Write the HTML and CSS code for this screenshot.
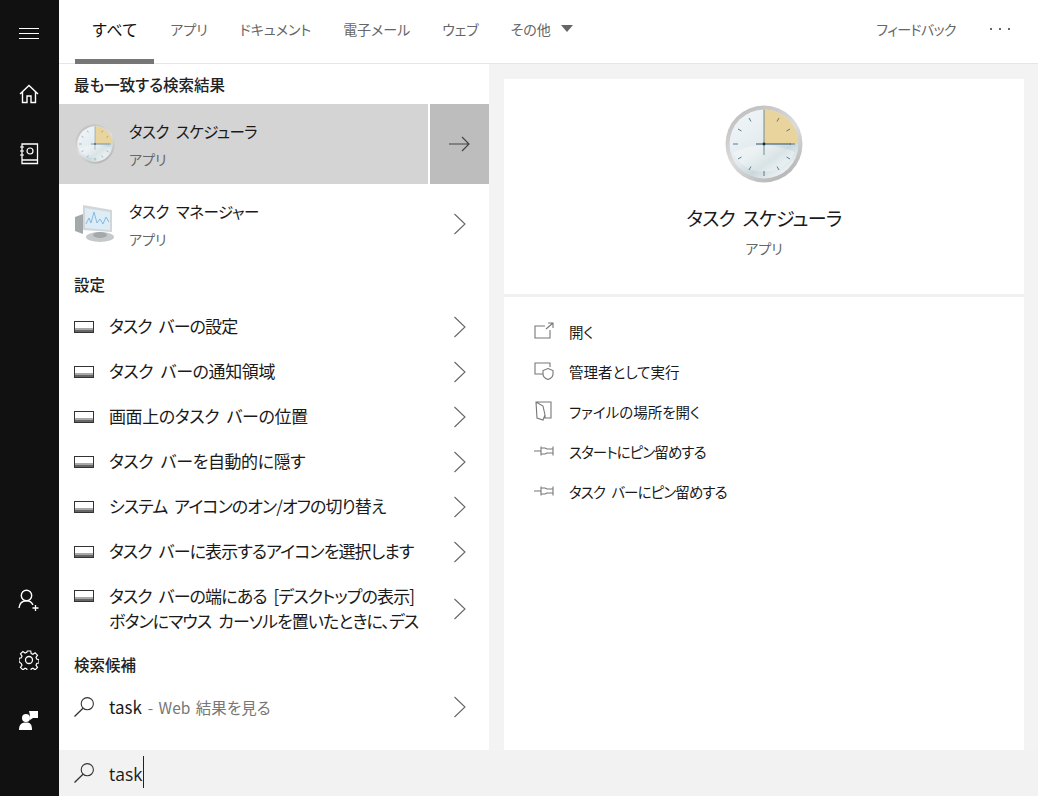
FILE: index.html
```html
<!DOCTYPE html>
<html lang="ja">
<head>
    <meta charset="UTF-8">
    <meta name="viewport" content="width=device-width, initial-scale=1.0">
    <title>タスク スケジューラ</title>
    <link rel="stylesheet" href="styles.css">
</head>
<body>
    <svg class="defs" width="0" height="0">
        <defs>
            <symbol id="chev" viewBox="0 0 14 24">
                <path d="M1.5 2 12 12 1.5 22" fill="none" stroke="#666" stroke-width="1.1"/>
            </symbol>
            <symbol id="bar" viewBox="0 0 20 12">
                <rect x="0.5" y="0.5" width="19" height="11" fill="none" stroke="#333"/>
                <rect x="1" y="7" width="18" height="2" fill="#a8a8a8"/>
                <rect x="1" y="9" width="18" height="2" fill="#666"/>
            </symbol>
            <symbol id="search" viewBox="0 0 20 20">
                <circle cx="13.3" cy="6.7" r="6.1" fill="none" stroke="#333" stroke-width="1.1"/>
                <path d="M9 11.2 .5 19.5" fill="none" stroke="#333" stroke-width="1.3"/>
            </symbol>
            <symbol id="pin" viewBox="0 0 20 12">
                <path d="M0 6H7M7 1.5V10.5M7 3H11L13 4H19M19 1.5V10.5M19 8H13L11 9H7" fill="none" stroke="#777" stroke-width="1.1"/>
            </symbol>
            <linearGradient id="face" x1="0.2" y1="0.1" x2="0.8" y2="0.95">
                <stop offset="0" stop-color="#eef3f6"/>
                <stop offset="0.5" stop-color="#e3ebee"/>
                <stop offset="0.72" stop-color="#c9d8dc"/>
                <stop offset="1" stop-color="#f2f6f7"/>
            </linearGradient>
            <linearGradient id="rim" x1="0.2" y1="0" x2="0.8" y2="1">
                <stop offset="0" stop-color="#bdbdbd"/>
                <stop offset="0.5" stop-color="#dcdcdc"/>
                <stop offset="1" stop-color="#b2b2b2"/>
            </linearGradient>
            <symbol id="clock" viewBox="0 0 78 78">
                <circle cx="39" cy="39" r="38.5" fill="url(#rim)"/>
                <circle cx="39" cy="39" r="34.5" fill="url(#face)"/>
                <path d="M39 39V4.5A34.5 34.5 0 0 1 73.5 39Z" fill="#e8d49c"/>
                <path d="M8 48C30 36 52 40 70 47A34.5 34.5 0 0 1 8 48Z" fill="#fff" opacity=".3"/>
                <g stroke="#4d6f80" stroke-width=".9">
                    <path d="M39 66v5M8 39h5M24 13l2 3.5M54 65l-2-3.5M13 24l3.5 2M65 54l-3.5-2M13 54l3.5-2M24 65l2-3.5M54 13l-2 3.5M65 24l-3.5 2M65 39h5"/>
                </g>
                <path d="M39 4.5V50" stroke="#6d8c9c"/>
                <path d="M31 39H66" stroke="#2c5068"/>
                <circle cx="39" cy="39" r="1.4" fill="#1d2b33"/>
            </symbol>
        </defs>
    </svg>

    <div class="app">
        <nav class="rail">
            <div class="rail-top">
                <button class="rail-btn">
                    <svg width="20" height="12" viewBox="0 0 20 12"><path d="M0 .5H20M0 5.5H20M0 10.5H20" stroke="#fff"/></svg>
                </button>
                <button class="rail-btn">
                    <svg width="20" height="20" viewBox="0 0 20 20"><path d="M1 10 10 1.5 19 10M3.5 8V18.5H8V12H12V18.5H16.5V8" fill="none" stroke="#fff" stroke-width="1.4"/></svg>
                </button>
                <button class="rail-btn">
                    <svg width="20" height="22" viewBox="0 0 20 22"><path d="M3 1H18.5V20.5H3ZM3 17H18.5" fill="none" stroke="#fff" stroke-width="1.3"/><circle cx="11" cy="8" r="3" fill="none" stroke="#fff" stroke-width="1.2"/><path d="M1 4H5M1 8H5M1 12H5" stroke="#fff" stroke-width="1.2"/></svg>
                </button>
            </div>
            <div class="rail-bottom">
                <button class="rail-btn">
                    <svg width="22" height="22" viewBox="0 0 22 22"><circle cx="8.5" cy="6.5" r="5.2" fill="none" stroke="#fff" stroke-width="1.4"/><path d="M1 19C1.5 14 4.5 11.7 8.5 11.7S14 13.5 15 16" fill="none" stroke="#fff" stroke-width="1.4"/><path d="M14.5 19H20.5M17.5 16V22" stroke="#fff" stroke-width="1.3"/></svg>
                </button>
                <button class="rail-btn">
                    <svg width="20" height="20" viewBox="0 0 20 20"><path d="M8.3 1h3.4l.5 2.6 1.7.7 2.2-1.5 2.4 2.4-1.5 2.2.7 1.7 2.300.5v3.400l-2.300.5-.7 1.700 1.500 2.200-2.400 2.400-2.200-1.500-1.700.7-.5 2.300H8.300l-.5-2.300-1.700-.7-2.200 1.500-2.400-2.400 1.500-2.200-.7-1.700L0 11.700V8.300l2.300-.5.7-1.700L1.500 3.900l2.400-2.400 2.200 1.500 1.700-.7Z" fill="none" stroke="#fff" stroke-width="1.2"/><circle cx="10" cy="10" r="3.5" fill="none" stroke="#fff" stroke-width="1.3"/></svg>
                </button>
                <button class="rail-btn">
                    <svg width="20" height="20" viewBox="0 0 20 20"><circle cx="7" cy="8" r="4" fill="#fff"/><path d="M0 20C0 14 3 12.5 7 12.5S13 14 13 20Z" fill="#fff"/><path d="M10 1H19V8H14L11 10V5.5Z" fill="#fff"/></svg>
                </button>
            </div>
        </nav>

        <div class="main">
            <header class="tabs">
                <a class="tab active">すべて</a>
                <a class="tab">アプリ</a>
                <a class="tab">ドキュメント</a>
                <a class="tab">電子メール</a>
                <a class="tab">ウェブ</a>
                <a class="tab">その他<span class="caret"></span></a>
                <span class="spacer"></span>
                <a class="feedback">フィードバック</a>
                <a class="more"><svg width="21" height="4" viewBox="0 0 21 4"><path d="M1 1h2v2H1zM10 1h2v2h-2zM19 1h2v2h-2z" fill="#666"/></svg></a>
            </header>

            <div class="body">
                <section class="results">
                    <h2 class="group first">最も一致する検索結果</h2>
                    <div class="app-row selected">
                        <div class="app-main">
                            <svg class="app-icon" width="40" height="40"><use href="#clock"/></svg>
                            <div>
                                <div class="app-name">タスク スケジューラ</div>
                                <div class="app-type">アプリ</div>
                            </div>
                        </div>
                        <div class="go">
                            <svg width="22" height="16" viewBox="0 0 22 16"><path d="M0 8H20M13 1 20 8 13 15" fill="none" stroke="#444" stroke-width="1.2"/></svg>
                        </div>
                    </div>
                    <div class="app-row">
                        <div class="app-main">
                            <svg class="app-icon" width="40" height="40" viewBox="0 0 40 40">
                                <path d="M0 13 8 10V30L0 27Z" fill="#a3a8ab"/>
                                <path d="M8 1 37 6V28L8 26Z" fill="#d2d6d9"/>
                                <path d="M10 4 35 8V26L10 24Z" fill="#dcedf7"/>
                                <path d="M11 20 14 14 16 19 19 8 22 19 25 15 28 20 31 13 34 18" fill="none" stroke="#8ab8dc"/>
                                <ellipse cx="25" cy="33" rx="14" ry="5" fill="#c6c9cb"/>
                                <ellipse cx="25" cy="31" rx="7" ry="3" fill="#a4a8aa"/>
                            </svg>
                            <div>
                                <div class="app-name">タスク マネージャー</div>
                                <div class="app-type">アプリ</div>
                            </div>
                        </div>
                        <svg class="chev" width="14" height="24"><use href="#chev"/></svg>
                    </div>

                    <h2 class="group">設定</h2>
                    <div class="row"><svg class="row-icon" width="20" height="12"><use href="#bar"/></svg><span class="row-text tight">タスク バーの設定</span><svg class="chev" width="14" height="24"><use href="#chev"/></svg></div>
                    <div class="row"><svg class="row-icon" width="20" height="12"><use href="#bar"/></svg><span class="row-text">タスク バーの通知領域</span><svg class="chev" width="14" height="24"><use href="#chev"/></svg></div>
                    <div class="row"><svg class="row-icon" width="20" height="12"><use href="#bar"/></svg><span class="row-text">画面上のタスク バーの位置</span><svg class="chev" width="14" height="24"><use href="#chev"/></svg></div>
                    <div class="row"><svg class="row-icon" width="20" height="12"><use href="#bar"/></svg><span class="row-text">タスク バーを自動的に隠す</span><svg class="chev" width="14" height="24"><use href="#chev"/></svg></div>
                    <div class="row"><svg class="row-icon" width="20" height="12"><use href="#bar"/></svg><span class="row-text tight">システム アイコンのオン/オフの切り替え</span><svg class="chev" width="14" height="24"><use href="#chev"/></svg></div>
                    <div class="row"><svg class="row-icon" width="20" height="12"><use href="#bar"/></svg><span class="row-text tight">タスク バーに表示するアイコンを選択します</span><svg class="chev" width="14" height="24"><use href="#chev"/></svg></div>
                    <div class="row tall"><svg class="row-icon" width="20" height="12"><use href="#bar"/></svg><span class="row-text tight">タスク バーの端にある [デスクトップの表示]<br>ボタンにマウス カーソルを置いたときに、デス</span><svg class="chev" width="14" height="24"><use href="#chev"/></svg></div>

                    <h2 class="group">検索候補</h2>
                    <div class="row"><svg class="row-icon" width="20" height="20"><use href="#search"/></svg><span class="row-text plain">task <span class="hint">- Web 結果を見る</span></span><svg class="chev" width="14" height="24"><use href="#chev"/></svg></div>
                </section>

                <section class="preview">
                    <div class="panel">
                        <div class="hero">
                            <svg width="78" height="78"><use href="#clock"/></svg>
                            <div class="hero-name">タスク スケジューラ</div>
                            <div class="hero-type">アプリ</div>
                        </div>
                        <ul class="actions">
                            <li><svg width="20" height="18" viewBox="0 0 20 18"><path d="M11 4H1V16H16V8M12 7 19 1M14 1H19V6" fill="none" stroke="#777" stroke-width="1.1"/></svg>開く</li>
                            <li><svg width="20" height="18" viewBox="0 0 20 18"><path d="M9 12H1V1H16V5" fill="none" stroke="#777" stroke-width="1.1"/><path d="M14 6.5 19 8.5V12C19 14.5 17 16.5 14 17.5 11 16.5 9 14.5 9 12V8.5Z" fill="none" stroke="#777" stroke-width="1.1"/></svg>管理者として実行</li>
                            <li><svg width="20" height="20" viewBox="0 0 20 20"><path d="M2 1H17V17H11V14L9 19 3 17ZM2 1 9 5 11 14" fill="none" stroke="#777" stroke-width="1.1"/></svg>ファイルの場所を開く</li>
                            <li class="kana"><svg width="20" height="12"><use href="#pin"/></svg>スタートにピン留めする</li>
                            <li class="kana"><svg width="20" height="12"><use href="#pin"/></svg>タスク バーにピン留めする</li>
                        </ul>
                    </div>
                </section>
            </div>

            <footer class="searchbar">
                <svg width="20" height="20"><use href="#search"/></svg>
                <span class="query">task</span>
            </footer>
        </div>
    </div>
</body>
</html>
```

FILE: styles.css
```css
* {
    box-sizing: border-box;
}
body {
    margin: 0;
    height: 796px;
    overflow: hidden;
    font-family: "Noto Sans CJK JP", "Open Sans", sans-serif;
    font-feature-settings: "palt";
    color: #1a1a1a;
    background-color: #fff;
}
.defs {
    display: block;
    height: 0;
}
.app {
    display: flex;
    height: 796px;
}

/* left rail */
.rail {
    width: 59px;
    flex: none;
    display: flex;
    flex-direction: column;
    justify-content: space-between;
    background-color: #111;
}
.rail-top {
    padding-top: 4px;
}
.rail-bottom {
    padding-bottom: 46px;
}
.rail-btn {
    display: flex;
    align-items: center;
    justify-content: center;
    width: 58px;
    height: 60px;
    padding: 0;
    border: none;
    background: none;
}

.main {
    flex: 1;
    display: flex;
    flex-direction: column;
    min-width: 0;
}

/* tabs */
.tabs {
    display: flex;
    align-items: stretch;
    height: 64px;
    padding-left: 16px;
    border-bottom: 1px solid #e6e6e6;
    font-size: 14px;
    color: #666;
}
.tab {
    display: flex;
    align-items: center;
    padding: 0 16px 2px;
    margin-bottom: -1px;
    border-bottom: 5px solid transparent;
}
.tab.active {
    padding: 0 16.5px 2px;
    color: #111;
    font-size: 16px;
    font-feature-settings: normal;
    border-bottom-color: #767676;
}
.caret {
    width: 0;
    height: 0;
    margin-left: 10px;
    border-left: 6.5px solid transparent;
    border-right: 6.5px solid transparent;
    border-top: 7px solid #666;
}
.spacer {
    flex: 1;
}
.feedback {
    display: flex;
    align-items: center;
    padding-bottom: 6px;
    letter-spacing: -0.6px;
}
.more {
    display: flex;
    align-items: center;
    padding: 0 28px 6px 33px;
}

.body {
    flex: 1;
    display: flex;
    min-height: 0;
}

/* results */
.results {
    width: 430px;
    flex: none;
}
.group {
    display: flex;
    align-items: center;
    height: 40px;
    margin: 0;
    padding-left: 15px;
    font-size: 15.5px;
    font-weight: 500;
    color: #222;
}
.app-row {
    display: flex;
    align-items: center;
    height: 80px;
    padding-right: 22px;
    justify-content: space-between;
}
.app-row.selected {
    padding-right: 0;
    background-color: #d4d4d4;
}
.app-main {
    display: flex;
    align-items: center;
    flex: 1;
    padding-left: 16px;
}
.app-icon {
    margin-right: 14px;
}
.app-name {
    font-size: 15.5px;
    line-height: 24px;
    letter-spacing: -0.5px;
    word-spacing: 4px;
}
.app-type {
    font-size: 14px;
    line-height: 22px;
    margin-top: 5px;
    color: #666;
}
.go {
    display: flex;
    align-items: center;
    justify-content: center;
    width: 61px;
    height: 80px;
    border-left: 2px solid #fff;
    background-color: #bdbdbd;
}
.row {
    display: flex;
    align-items: center;
    height: 45px;
    padding: 0 22px 0 15px;
}
.row.tall {
    height: 70px;
}
.row.tall .row-icon {
    align-self: flex-start;
    margin-top: 16px;
}
.row-icon {
    flex: none;
    margin-right: 15px;
}
.row-text {
    flex: 1;
    margin-bottom: 2px;
    font-size: 17px;
    line-height: 25px;
    letter-spacing: -0.4px;
    word-spacing: 4px;
}
.row-text.tight {
    letter-spacing: -0.9px;
}
.row-text.plain {
    margin-bottom: 0;
    letter-spacing: 0;
    word-spacing: 2px;
}
.hint {
    font-size: 15.5px;
    color: #777;
}
.chev {
    flex: none;
}

/* right side */
.preview {
    flex: 1;
    padding: 15px 14px 0 15px;
    background-color: #f3f3f3;
}
.panel {
    height: 671px;
    background-color: #fff;
}
.hero {
    display: flex;
    flex-direction: column;
    align-items: center;
    height: 218px;
    padding-top: 26px;
    border-bottom: 3px solid #f0f0f0;
}
.hero-name {
    margin-top: 20px;
    font-size: 19px;
    line-height: 30px;
    letter-spacing: -0.7px;
    word-spacing: 4px;
}
.hero-type {
    margin-top: 3px;
    font-size: 14px;
    line-height: 24px;
    color: #666;
}
.actions {
    list-style: none;
    margin: 0;
    padding: 14px 0 0 30px;
}
.actions li {
    display: flex;
    align-items: center;
    gap: 15px;
    height: 40px;
    font-size: 14.5px;
}
.actions li.kana {
    letter-spacing: -0.9px;
    word-spacing: 4px;
}

/* bottom search */
.searchbar {
    display: flex;
    align-items: center;
    gap: 15px;
    height: 46px;
    flex: none;
    padding-left: 15px;
    background-color: #f2f2f2;
}
.query {
    height: 32px;
    margin-top: -2px;
    border-right: 1.5px solid #222;
    font-size: 17.5px;
    line-height: 36px;
    font-family: "Open Sans", sans-serif;
}
```
